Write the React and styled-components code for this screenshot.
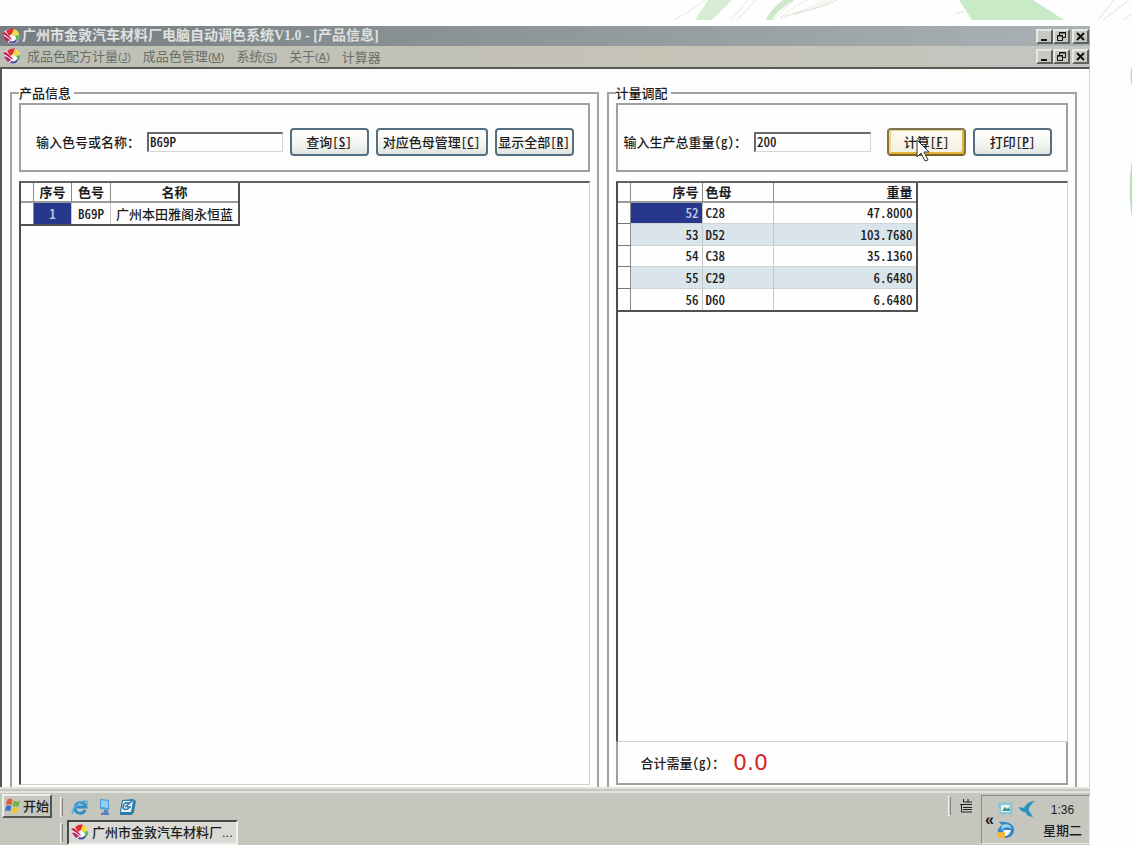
import styled, {createGlobalStyle, css} from "styled-components";
import {useState} from "react";

const GlobalStyle = createGlobalStyle`
  *{
    box-sizing: border-box;
  }
  body{
    margin: 0;
    background-color: #fefefe;
    color: #1c1c1c;
    font-family: "Noto Sans CJK SC", sans-serif;
    font-feature-settings: "hwid";
    font-size: 13px;
    font-weight: 500;
    line-height: 16px;
  }
  button, input{
    font: inherit;
    font-feature-settings: inherit;
    color: inherit;
  }
  svg{
    flex-shrink: 0;
  }
`;

const Page = styled.div`
  display: flex;
  flex-direction: column;
  min-height: 100vh;
`;

const Banner = styled.header`
  display: flex;
  justify-content: flex-end;
  height: 20px;
  margin-bottom: 6px;
  overflow: hidden;
`;

const Body = styled.div`
  flex: 1;
  display: grid;
  grid-template-columns: 1fr 42px;
`;

const Side = styled.aside`
  display: flex;
  justify-content: flex-end;
`;

const Screen = styled.div`
  display: flex;
  flex-direction: column;
`;

const TitleBar = styled.div`
  display: flex;
  align-items: center;
  gap: 2px;
  height: 20px;
  padding: 0 1px 0 2px;
  background: linear-gradient(90deg, #777d81, #8f9799 50%, #aab2b5);
`;

const Title = styled.h1`
  flex: 1;
  margin: 0;
  color: #dfe1e0;
  font-family: "Liberation Serif", "Noto Sans CJK SC", serif;
  font-size: 14px;
  font-weight: 700;
  line-height: 18px;
  white-space: nowrap;
`;

const MenuBar = styled.nav`
  display: flex;
  align-items: center;
  height: 21px;
  padding: 0 1px 0 3px;
  background: linear-gradient(90deg, #bdc0b7, #c5c2b6 60%, #c4c6c2);
`;

const MenuList = styled.div`
  flex: 1;
  display: flex;
  gap: 12px;
  padding-left: 6px;
`;

const MenuItem = styled.button`
  padding: 0;
  border: 0;
  background: none;
  color: #6c6e69;
  font-weight: 400;
  white-space: nowrap;
`;

const Shortcut = styled.span`
  font-family: "Liberation Sans", sans-serif;
  font-size: 11px;
`;

const Controls = styled.div`
  display: flex;
`;

const ControlButton = styled.button`
  display: flex;
  width: 17px;
  height: 15px;
  padding: 0;
  border: 2px solid;
  border-color: #e8e8e4 #5e605c #5e605c #e8e8e4;
  background-color: #c6c8c1;
  &:last-child{
    margin-left: 2px;
  }
`;

const Client = styled.main`
  flex: 1;
  display: grid;
  grid-template-columns: 588fr 470fr;
  gap: 8px;
  padding: 16px 12px 0 8px;
  border-top: 2px solid #555855;
  border-left: 2px solid #555855;
  border-right: 1px solid #d2d2d2;
  background-color: #fdfdfd;
`;

const Group = styled.fieldset`
  display: flex;
  flex-direction: column;
  min-width: 0;
  margin: 0;
  padding: 2px 7px 2px 7px;
  border: 2px solid #a3a3a3;
  border-bottom: 0;
`;

const Legend = styled.legend`
  padding: 0 3px 0 0;
  line-height: 16px;
`;

const SearchPanel = styled.form`
  display: flex;
  align-items: center;
  gap: 7px;
  height: 69px;
  margin-bottom: 9px;
  padding: 8px 14px 0 ${props => props.$indent}px;
  border: 2px solid #a0a0a0;
  label{
    white-space: nowrap;
  }
`;

const TextBox = styled.input`
  width: ${props => props.$width}px;
  min-width: 0;
  height: 20px;
  padding: 0 0 2px 1px;
  border: 1px solid #d4d4d4;
  border-top: 2px solid #686868;
  border-left: 2px solid #686868;
  border-radius: 0;
  background-color: #fefefe;
  outline: none;
`;

const ButtonGroup = styled.div`
  display: flex;
  gap: 7px;
  margin-left: ${props => props.$push || 0}px;
`;

const Button = styled.button`
  position: relative;
  min-width: 79px;
  height: 28px;
  padding: 0 ${props => props.$tight ? 0 : 4}px;
  border: 2px solid #566f80;
  border-radius: 4px;
  background: linear-gradient(#fefefe, #f3f5f2 60%, #dfe5e1);
  white-space: nowrap;
  ${props => props.$wide && css`
    min-width: 112px;
  `}
  ${props => props.$active && css`
    border-color: #7b7250 #84733c #796222 #84733c;
    background: linear-gradient(#fdfcf0, #f0f0e0);
    box-shadow: inset 2px 1px 0 #f2d88a, inset -2px -2px 0 #e5b23c;
  `}
`;

const Cursor = styled.svg`
  position: absolute;
  left: 26px;
  top: 9px;
  pointer-events: none;
`;

const GridBox = styled.div`
  flex: 1;
  border: 1px solid #d0d0d0;
  border-top: 2px solid #626262;
  border-left: 2px solid #4d4d4d;
  background-color: #fefefe;
`;

const Table = styled.table`
  border-collapse: separate;
  border-spacing: 0;
  table-layout: fixed;
  width: ${props => props.$width}px;
  border-right: 2px solid #505050;
  border-bottom: 2px solid #505050;
`;

const Th = styled.th`
  width: ${props => props.$width}px;
  height: 20px;
  padding: 0 3px;
  border-right: 1px solid #8a8a8a;
  border-bottom: 2px solid #9a9a9a;
  font-weight: 700;
  line-height: 16px;
  text-align: ${props => props.$align};
  &:last-child{
    border-right: 0;
  }
`;

const Row = styled.tr`
  height: 21px;
  background-color: #fefefe;
  &:nth-child(even){
    height: 22px;
    background-color: #dae5eb;
  }
`;

const Td = styled.td`
  padding: 0 3px;
  border-right: 1px solid #c4c9cc;
  border-bottom: 1px solid #cfd4d6;
  line-height: 16px;
  text-align: ${props => props.$align};
  white-space: nowrap;
  &:last-child{
    border-right: 0;
  }
  tr:last-child > &{
    border-bottom: 0;
  }
  ${props => props.$selected && css`
    background-color: #27388c;
    color: #c8cde6;
  `}
`;

const Indicator = styled.td`
  padding: 0;
  border-right: 1px solid #8a8a8a;
  border-bottom: 1px solid #777;
  background-color: #fefefe;
  tr:last-child > &{
    border-bottom: 0;
  }
`;

const Summary = styled.div`
  display: flex;
  align-items: center;
  gap: 8px;
  height: 43px;
  padding-left: 23px;
  border: 2px solid #a0a0a0;
  border-top: 0;
`;

const Total = styled.output`
  color: #d8272b;
  font-family: "DejaVu Sans", sans-serif;
  font-size: 22px;
  font-weight: 400;
  line-height: 24px;
`;

const TaskBar = styled.footer`
  display: flex;
  gap: 8px;
  height: 58px;
  padding: 1px 0 0 2px;
  border-top: 6px double #e2e3df;
  background-color: #c5c7be;
`;

const StartButton = styled.button`
  display: flex;
  align-items: center;
  gap: 1px;
  width: 50px;
  height: 24px;
  padding: 0;
  border: 2px solid;
  border-color: #eeeeea #555 #555 #eeeeea;
  background-color: #c6c8c0;
  white-space: nowrap;
`;

const Bands = styled.div`
  flex: 1;
  display: flex;
  flex-direction: column;
  gap: 1px;
`;

const Band = styled.div`
  display: flex;
  align-items: center;
  height: 25px;
  gap: ${props => props.$gap}px;
`;

const Grip = styled.span`
  width: 3px;
  height: 20px;
  border: 1px solid #f0f0ec;
  border-right-color: #85877f;
`;

const QuickLink = styled.button`
  display: flex;
  padding: 0;
  border: 0;
  background: none;
`;

const TaskButton = styled.button`
  display: flex;
  align-items: center;
  gap: 3px;
  width: 171px;
  height: 25px;
  padding: 0 2px;
  border: 2px solid;
  border-color: #484a46 #f0f0ec #f0f0ec #484a46;
  background-color: #d9dad6;
  font-family: "Liberation Sans", "Noto Sans CJK SC", sans-serif;
  white-space: nowrap;
`;

const Language = styled.div`
  display: flex;
  gap: 8px;
  height: 24px;
  align-items: center;
`;

const Tray = styled.div`
  display: flex;
  align-items: center;
  width: 109px;
  height: 49px;
  margin-top: 1px;
  padding-left: 3px;
  border: 1px solid #8b8d87;
  border-bottom-color: #eeeeea;
  border-right-color: #eeeeea;
`;

const TrayIcons = styled.div`
  display: grid;
  grid-template-columns: 18px 18px;
  gap: 3px;
  margin-left: 3px;
`;

const Expand = styled.button`
  padding: 0;
  border: 0;
  background: none;
  font-family: "Liberation Sans", sans-serif;
  font-size: 16px;
  font-weight: 700;
`;

const Clock = styled.div`
  flex: 1;
  display: flex;
  flex-direction: column;
  align-items: center;
  gap: 4px;
`;

const ClockTime = styled.time`
  font-family: "Liberation Sans", sans-serif;
  font-size: 12px;
`;

function PaletteIcon() {
  return (
    <svg width="18" height="17" viewBox="0 0 18 17" aria-hidden="true">
      <path d="M1 5C4 1 9 0 13 2c4 2 5 6 4 9-1 4-5 5-8 5-2 0-3-2-4-4z" fill="#f6f1f3"/>
      <path d="M4 3c2-2 6-3 8-2L10 6 7 8z" fill="#e23038"/>
      <path d="M12 1c3 1 5 3 5 6l-5 1-2-2z" fill="#f0dc3c"/>
      <path d="M17 7c1 3 0 5-2 6l-3-5z" fill="#5cb868"/>
      <path d="M15 13c-2 3-5 3-8 2l1-2c3 1 5 0 6-2z" fill="#4a4aa8"/>
      <path d="M0 5l3-1 6 6-2 1z" fill="#c81e48"/>
      <path d="M1 9l5-1 4 3-5 3z" fill="#b82862"/>
      <path d="M2 7l7 5" stroke="#fff" strokeWidth="1"/>
      <circle cx="12" cy="10" r="2" fill="#fff"/>
    </svg>
  );
}

function WindowControls({name}) {
  return (
    <Controls>
      <ControlButton type="button" aria-label={name + " 最小化"}>
        <svg width="13" height="11"><path d="M3 8h6v2H3z" fill="#111"/></svg>
      </ControlButton>
      <ControlButton type="button" aria-label={name + " 还原"}>
        <svg width="13" height="11" fill="none" stroke="#111">
          <path d="M4.500 4V1.500h6v5H8M4 2h7M2.500 4.500h5v5h-5zM2 5h6"/>
        </svg>
      </ControlButton>
      <ControlButton type="button" aria-label={name + " 关闭"}>
        <svg width="13" height="11"><path d="M3 2l7 7M10 2L3 9" stroke="#111" strokeWidth="2"/></svg>
      </ControlButton>
    </Controls>
  );
}

function BannerArt() {
  return (
    <svg width="480" height="20" viewBox="0 0 480 20" aria-hidden="true">
      <path d="M56 0h24L60 20H43z" fill="#d6edd3"/>
      <path d="M22 20C34 13 45 7 53 0M79 20L96 0M85 20L104 0" fill="none" stroke="#dde8da" strokeWidth="1"/>
      <path d="M131 0c-7 5-14 12-17 20h6c5-9 13-14 22-20z" fill="#cde9ca"/>
      <path d="M142 0l-21 20M155 0c-9 3-19 12-27 18 15-4 31-11 46-18M180 0c-16 8-33 14-48 16" fill="none" stroke="#e2efdf" strokeWidth="1"/>
      <path d="M185 0c-14 7-30 11-44 14" fill="none" stroke="#ecd9d9"/>
      <path d="M307 0h74l31 20h-92z" fill="#c9eac6"/>
      <path d="M303 14l9-3M446 20L462 0M451 20L477 0M471 20l9-6" fill="none" stroke="#dce2d8"/>
    </svg>
  );
}

function Key({children}) {
  return <>[<u>{children}</u>]</>;
}

const menus = [
  {label: "成品色配方计量", key: "J"},
  {label: "成品色管理", key: "M"},
  {label: "系统", key: "S"},
  {label: "关于", key: "A"},
  {label: "计算器"},
];

const weights = [
  {no: 52, base: "C28", weight: "47.8000"},
  {no: 53, base: "D52", weight: "103.7680"},
  {no: 54, base: "C38", weight: "35.1360"},
  {no: 55, base: "C29", weight: "6.6480"},
  {no: 56, base: "D60", weight: "6.6480"},
];

function ProductGroup() {
  const [query, setQuery] = useState("B69P");

  return (
    <Group>
      <Legend>产品信息</Legend>
      <SearchPanel $indent={15} onSubmit={ev => ev.preventDefault()}>
        <label htmlFor="query">输入色号或名称：</label>
        <TextBox id="query" $width={137} value={query} onChange={ev => setQuery(ev.target.value)}/>
        <ButtonGroup>
          <Button type="submit">查询<Key>S</Key></Button>
          <Button type="button" $wide>对应色母管理<Key>C</Key></Button>
          <Button type="button" $tight>显示全部<Key>R</Key></Button>
        </ButtonGroup>
      </SearchPanel>
      <GridBox>
        <Table $width={219}>
          <thead>
            <tr>
              <Th $width={13}/>
              <Th $width={38} $align="center">序号</Th>
              <Th $width={39} $align="center">色号</Th>
              <Th $align="center">名称</Th>
            </tr>
          </thead>
          <tbody>
            <Row>
              <Indicator/>
              <Td $align="center" $selected>1</Td>
              <Td $align="center">B69P</Td>
              <Td $align="center">广州本田雅阁永恒蓝</Td>
            </Row>
          </tbody>
        </Table>
      </GridBox>
    </Group>
  );
}

function WeighGroup() {
  const [total, setTotal] = useState("200");

  return (
    <Group>
      <Legend>计量调配</Legend>
      <SearchPanel $indent={6} onSubmit={ev => ev.preventDefault()}>
        <label htmlFor="total">输入生产总重量(g)：</label>
        <TextBox id="total" $width={119} value={total} onChange={ev => setTotal(ev.target.value)}/>
        <ButtonGroup $push={9}>
          <Button type="submit" $active>
            计算<Key>F</Key>
            <Cursor width="15" height="24" viewBox="0 0 15 24" aria-hidden="true">
              <path d="M2 1v17l4-4 4 8 3-1-4-8h5z" fill="#fff" stroke="#333" strokeWidth="1"/>
            </Cursor>
          </Button>
          <Button type="button">打印<Key>P</Key></Button>
        </ButtonGroup>
      </SearchPanel>
      <GridBox>
        <Table $width={300}>
          <thead>
            <tr>
              <Th $width={13}/>
              <Th $width={72} $align="right">序号</Th>
              <Th $width={71} $align="left">色母</Th>
              <Th $align="right">重量</Th>
            </tr>
          </thead>
          <tbody>
            {weights.map((row, index) => (
              <Row key={row.no}>
                <Indicator/>
                <Td $align="right" $selected={index === 0}>{row.no}</Td>
                <Td $align="left">{row.base}</Td>
                <Td $align="right">{row.weight}</Td>
              </Row>
            ))}
          </tbody>
        </Table>
      </GridBox>
      <Summary>
        <label htmlFor="sum">合计需量(g)：</label>
        <Total id="sum">0.0</Total>
      </Summary>
    </Group>
  );
}

function QuickLaunch() {
  return (
    <>
      <QuickLink type="button" aria-label="Internet Explorer">
        <svg width="18" height="18" viewBox="0 0 18 18" fill="none">
          <path d="M14 12c-2 5-10 4-10-2 0-7 10-7 11-1H5" stroke="#2f8fc9" strokeWidth="3"/>
          <path d="M2 16c-3-3 6-13 12-13 2 0 3 1 2 4" stroke="#5aaedc" strokeWidth="1.500"/>
        </svg>
      </QuickLink>
      <QuickLink type="button" aria-label="桌面">
        <svg width="14" height="18" viewBox="0 0 14 18">
          <path d="M3 1l9 1v10l-9-1z" fill="#4e9bdc"/>
          <path d="M4 2l7 1v7L4 9z" fill="#93cdf3"/>
          <path d="M7 12h4v2l1 1v2H4v-2l3-1z" fill="#5a83bd"/>
        </svg>
      </QuickLink>
      <QuickLink type="button" aria-label="Outlook">
        <svg width="17" height="18" viewBox="0 0 17 18">
          <path d="M3 2l11-1 3 2-2 11-2 3H1L1 13z" fill="#2c7da9"/>
          <path d="M4 3h10l-2 11H2z" fill="#e3f3f8"/>
          <path d="M10 5c-4-1-6 1-6 4s4 3 6 1M6 9l7-6M8 9h4" stroke="#2674aa" strokeWidth="1.500" fill="none"/>
        </svg>
      </QuickLink>
    </>
  );
}

export default function App() {
  return (
    <Page>
      <GlobalStyle/>
      <Banner><BannerArt/></Banner>
      <Body>
        <Screen>
          <TitleBar>
            <PaletteIcon/>
            <Title>广州市金敦汽车材料厂电脑自动调色系统V1.0 - [产品信息]</Title>
            <WindowControls name="程序"/>
          </TitleBar>
          <MenuBar>
            <PaletteIcon/>
            <MenuList>
              {menus.map(menu => (
                <MenuItem type="button" key={menu.label}>
                  {menu.label}{menu.key && <Shortcut>(<u>{menu.key}</u>)</Shortcut>}
                </MenuItem>
              ))}
            </MenuList>
            <WindowControls name="窗口"/>
          </MenuBar>
          <Client>
            <ProductGroup/>
            <WeighGroup/>
          </Client>
          <TaskBar>
            <StartButton type="button">
              <svg width="18" height="18" viewBox="0 0 17 16" aria-hidden="true">
                <path d="M3 2c2-1 4-1 5 0L7 7c-2-1-3-1-5 0z" fill="#df5b30"/>
                <path d="M9 3c2 1 4 1 6 0l-1 5c-2 1-4 1-6 0z" fill="#74b344"/>
                <path d="M2 8c2-1 3-1 5 0l-1 5c-2-1-3-1-5 0z" fill="#3c72c4"/>
                <path d="M8 9c2 1 4 1 6 0l-1 5c-2 1-4 1-6 0z" fill="#f0c63b"/>
              </svg>
              开始
            </StartButton>
            <Bands>
              <Band $gap={8}>
                <Grip/>
                <QuickLaunch/>
              </Band>
              <Band $gap={4}>
                <Grip/>
                <TaskButton type="button">
                  <PaletteIcon/>
                  广州市金敦汽车材料厂...
                </TaskButton>
              </Band>
            </Bands>
            <Language>
              <Grip/>
              <svg width="14" height="16" viewBox="0 0 14 16" fill="none" stroke="#222" role="img" aria-label="输入法">
                <path d="M4.500 1v3H13M9 1v3M1 6.500h12M2.500 7v7H13M4 9.500h9M4 11.500h9" strokeWidth="1"/>
              </svg>
            </Language>
            <Tray>
              <Expand type="button">«</Expand>
              <TrayIcons>
                <svg width="18" height="18" viewBox="0 0 18 18" aria-hidden="true">
                  <path d="M1 2l4 1 3-1 4 1 4-2-1 5 1 3-1 6-5-1-4 1-4-1 1-4-2-3z" fill="#8cc3d6"/>
                  <path d="M4 5h9v7H4z" fill="#e7f3f0"/>
                  <path d="M5 11l3-4 2 2 2-2 1 4z" fill="#3c948c"/>
                </svg>
                <svg width="18" height="18" viewBox="0 0 18 18" aria-hidden="true">
                  <path d="M17 1c-5 0-9 3-11 7L1 7c1 4 4 5 6 5l3 4 5 1-4-6c-1-3 2-7 6-10z" fill="#2793bf"/>
                </svg>
                <svg width="18" height="18" viewBox="0 0 18 18" aria-hidden="true">
                  <path d="M2 1c8-1 16 2 15 9-1 5-5 7-9 7-6 0-8-4-7-8 1-3 3-4 4-5z" fill="#2f86c8"/>
                  <path d="M5 4c5-2 9 0 10 4-4-3-8-2-11 1z" fill="#9ed6f0"/>
                  <path d="M6 9h8c-1 4-4 6-6 6z" fill="#f5f7f5"/>
                  <path d="M1 11h7v6H1z" fill="#edb63c"/>
                </svg>
              </TrayIcons>
              <Clock>
                <ClockTime>1:36</ClockTime>
                <span>星期二</span>
              </Clock>
            </Tray>
          </TaskBar>
        </Screen>
        <Side>
          <svg width="3" height="200" aria-hidden="true">
            <path d="M3 40c-2 5-2 14 0 20zM3 135c-3 16-3 40 0 56z" fill="#b6dfb4"/>
          </svg>
        </Side>
      </Body>
    </Page>
  );
}
